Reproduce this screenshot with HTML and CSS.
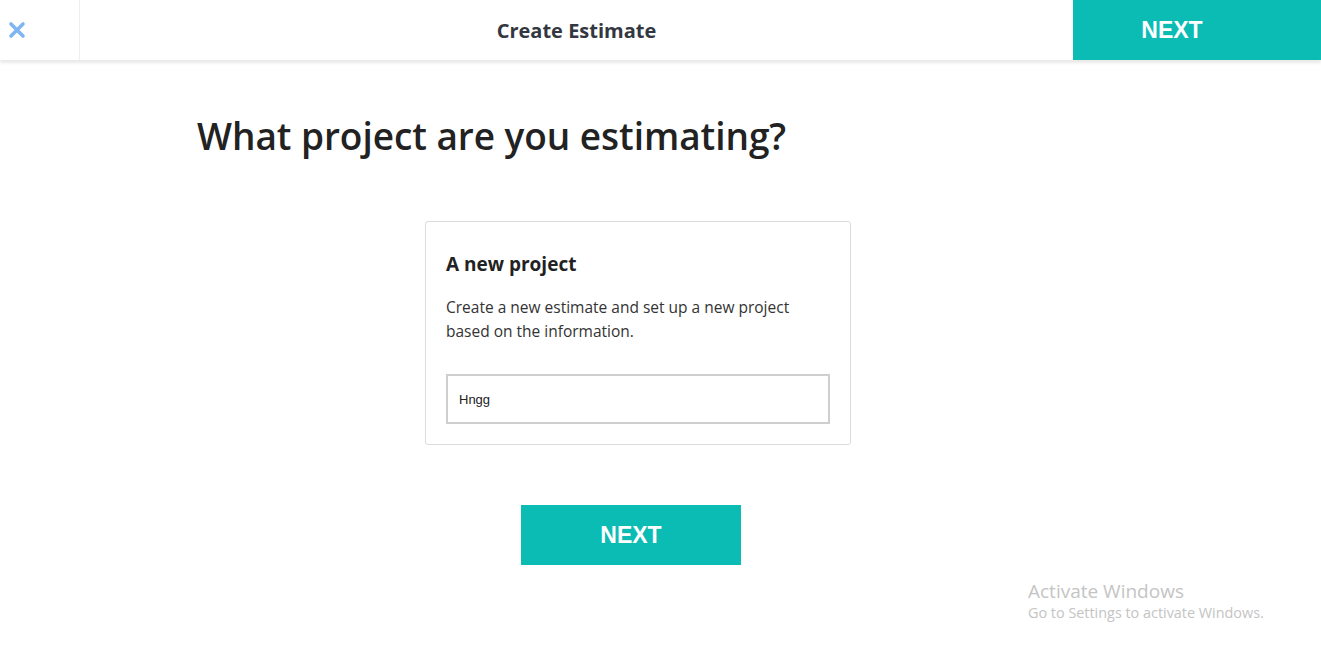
FILE: index.html
```html
<!DOCTYPE html>
<html>
<head>
<meta charset="utf-8">
<link rel="stylesheet" href="styles.css">
</head>
<body>
<header class="topbar">
  <div class="close">
    <svg width="18" height="18" viewBox="0 0 18 18"><path d="M3 3 L15 15 M15 3 L3 15" stroke="#7fb6f2" stroke-width="3.6" stroke-linecap="round"/></svg>
  </div>
  <div class="title">Create Estimate</div>
  <button class="next-top">NEXT</button>
</header>
<main class="main">
  <h1 class="question">What project are you estimating?</h1>
  <div class="column">
    <section class="card">
      <h2 class="card-title">A new project</h2>
      <p class="card-text">Create a new estimate and set up a new project based on the information.</p>
      <div class="input">Hngg</div>
    </section>
    <button class="next-main">NEXT</button>
  </div>
</main>
<div class="watermark">
  <div class="wm1">Activate Windows</div>
  <div class="wm2">Go to Settings to activate Windows.</div>
</div>
</body>
</html>
```
FILE: styles.css
```css
* { box-sizing: border-box; }
body {
  margin: 0;
  background: #fff;
  font-family: "Open Sans", "DejaVu Sans", sans-serif;
  color: #222;
}
.topbar {
  display: flex;
  height: 60px;
  align-items: stretch;
  box-shadow: 0 3px 3px rgba(0,0,0,0.09);
  position: relative;
}
.close {
  width: 80px;
  border-right: 1px solid #efefef;
  display: flex;
  align-items: center;
  padding-left: 8px;
}
.title {
  flex: 1;
  display: flex;
  align-items: center;
  justify-content: center;
  font-size: 20px;
  font-weight: 700;
  color: #333741;
}
.next-top {
  width: 248px;
  border: 0;
  background: #0bbcb5;
  color: #fff;
  font-family: "Liberation Sans", Arial, sans-serif;
  font-weight: 700;
  font-size: 23px;
  padding: 1px 50px 0 0;
}
.main {
  padding-left: 197px;
}
.question {
  margin: 0;
  padding-top: 52px;
  font-size: 37px;
  font-weight: 600;
  color: #222;
  letter-spacing: -0.05px;
  line-height: 48px;
}
.column {
  margin-left: 228px;
  width: 426px;
  padding-top: 61px;
}
.card {
  border: 1px solid #dcdcdc;
  border-radius: 3px;
  padding: 27px 20px 20px 20px;
}
.card-title {
  margin: 0;
  font-size: 19px;
  font-weight: 700;
  color: #222;
  line-height: 30px;
}
.card-text {
  margin: 16px 0 0 0;
  font-size: 15.5px;
  line-height: 24px;
  color: #333;
}
.input {
  margin-top: 31px;
  height: 50px;
  border: 2px solid #cfcfcf;
  padding: 0 11px;
  display: flex;
  align-items: center;
  font-family: "Liberation Sans", Arial, sans-serif;
  font-size: 13px;
  color: #222;
}
.next-main {
  display: block;
  margin: 60px 0 0 96px;
  width: 220px;
  height: 60px;
  border: 0;
  background: #0bbcb5;
  color: #fff;
  font-family: "Liberation Sans", Arial, sans-serif;
  font-weight: 700;
  font-size: 23px;
}
.watermark {
  position: absolute;
  left: 1028px;
  top: 580px;
  color: #c4c4c4;
  font-family: "Open Sans", sans-serif;
}
.wm1 { font-size: 19px; line-height: 22px; }
.wm2 { font-size: 14.4px; line-height: 22px; }
```
